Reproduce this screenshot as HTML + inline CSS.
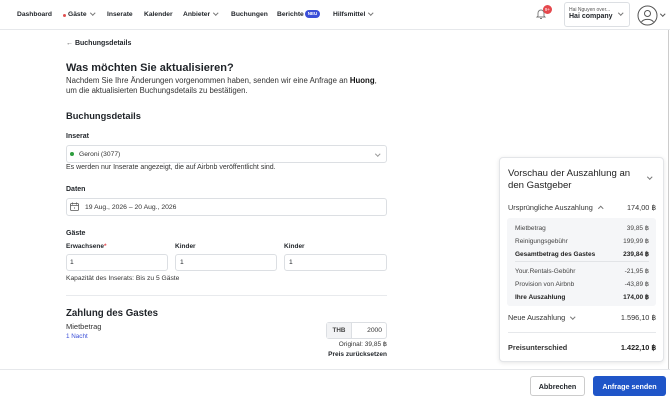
<!DOCTYPE html><html><head><meta charset="utf-8"><style>
*{margin:0;padding:0;box-sizing:border-box}
body{width:670px;height:402px;overflow:hidden;background:#fff;font-family:"Liberation Sans",sans-serif;color:#1f2328;position:relative}
.a{position:absolute;white-space:nowrap}
.nav{font-size:6.7px;font-weight:bold;top:11px}
.b{font-weight:bold}
.box{position:absolute;border:1px solid #dcdfe3;border-radius:3px;background:#fff}
.sm{font-size:7px}
.r{text-align:right}
.chev{display:inline-block;width:3.5px;height:3.5px;border-right:.8px solid #777;border-bottom:.8px solid #777;transform:rotate(45deg);margin-left:4px;position:relative;top:-2px}
.pc{position:absolute;width:3.5px;height:3.5px;border-right:.8px solid #777;border-bottom:.8px solid #777;transform:rotate(45deg)}
</style></head><body>
<div class="a" style="left:0;top:29px;width:670px;height:1px;background:#e6e8eb"></div>
<div class="a nav" style="left:17px">Dashboard</div>
<div class="a" style="left:63px;top:14px;width:3px;height:3px;border-radius:2px;background:#e05050"></div>
<div class="a nav" style="left:68px">Gäste<span class="chev"></span></div>
<div class="a nav" style="left:107px">Inserate</div>
<div class="a nav" style="left:144px">Kalender</div>
<div class="a nav" style="left:183px">Anbieter<span class="chev"></span></div>
<div class="a nav" style="left:231px">Buchungen</div>
<div class="a nav" style="left:277px">Berichte</div>
<div class="a" style="left:305px;top:10px;width:15px;height:8px;border-radius:4px;background:#3b4fd8;color:#fff;font-size:4.5px;font-weight:bold;text-align:center;line-height:8px">NEU</div>
<div class="a nav" style="left:333px">Hilfsmittel<span class="chev"></span></div>
<svg class="a" style="left:535px;top:8px" width="12" height="12" viewBox="0 0 12 12"><path d="M3 8V5a3 3 0 016 0v3l1 1H2z M5 10.5h2" fill="none" stroke="#777" stroke-width=".9"/></svg>
<div class="a" style="left:543px;top:5px;width:9px;height:9px;border-radius:5px;background:#e5484d;color:#fff;font-size:4.5px;text-align:center;line-height:9px">9+</div>
<div class="box" style="left:564px;top:2px;width:66px;height:25px"></div>
<div class="a" style="left:569px;top:7px;font-size:5px;color:#555">Hai Nguyen over...</div>
<div class="a b" style="left:569px;top:13px;font-size:7px">Hai company</div>
<span class="pc" style="left:619px;top:11px"></span>
<svg class="a" style="left:637px;top:5px" width="21" height="21" viewBox="0 0 21 21"><circle cx="10.5" cy="10.5" r="9.5" fill="none" stroke="#555" stroke-width="1"/><circle cx="10.5" cy="8.5" r="3" fill="none" stroke="#555"/><path d="M4.5 17c2-3.5 10-3.5 12 0" fill="none" stroke="#555"/></svg>
<span class="pc" style="left:661px;top:12px;border-color:#555"></span>
<div class="a" style="left:668px;top:30px;width:1px;height:340px;background:#ccc"></div>

<div class="a" style="left:66px;top:40px;font-size:7px"><span style="color:#555">←</span> <b>Buchungsdetails</b></div>
<div class="a b" style="left:66px;top:62px;font-size:11px">Was möchten Sie aktualisieren?</div>
<div class="a" style="left:66px;top:76px;font-size:7.8px;line-height:10px;color:#333">Nachdem Sie Ihre Änderungen vorgenommen haben, senden wir eine Anfrage an <b style="color:#111">Huong</b>,<br>um die aktualisierten Buchungsdetails zu bestätigen.</div>
<div class="a b" style="left:66px;top:111px;font-size:9.3px">Buchungsdetails</div>
<div class="a b sm" style="left:66px;top:133px">Inserat</div>
<div class="box" style="left:66px;top:145px;width:321px;height:18px"></div>
<div class="a" style="left:70px;top:152px;width:4px;height:4px;border-radius:2px;background:#2e9e3e"></div>
<div class="a" style="left:79px;top:151px;font-size:6.7px;color:#333">Geroni (3077)</div>
<span class="pc" style="left:376px;top:152px;border-color:#999"></span>
<div class="a" style="left:66px;top:164px;font-size:7px;color:#333">Es werden nur Inserate angezeigt, die auf Airbnb veröffentlicht sind.</div>
<div class="a b sm" style="left:66px;top:186px">Daten</div>
<div class="box" style="left:66px;top:198px;width:321px;height:18px"></div>
<svg class="a" style="left:70px;top:202px" width="9" height="9" viewBox="0 0 9 9"><rect x=".5" y="1.5" width="8" height="7" rx="1" fill="none" stroke="#555" stroke-width=".8"/><path d="M.5 3.5h8M2.5 .5v2M6.5 .5v2" stroke="#555" stroke-width=".8"/><rect x="4" y="5.5" width="1" height="1" fill="#555"/></svg>
<div class="a" style="left:85px;top:204px;font-size:6.8px;color:#333">19 Aug., 2026 – 20 Aug., 2026</div>
<div class="a b sm" style="left:66px;top:230px">Gäste</div>
<div class="a b" style="left:66px;top:243px;font-size:6.5px">Erwachsene<span style="color:#e5484d">*</span></div>
<div class="a b" style="left:175px;top:243px;font-size:6.5px">Kinder</div>
<div class="a b" style="left:284px;top:243px;font-size:6.5px">Kinder</div>
<div class="box" style="left:66px;top:254px;width:102px;height:17px"></div>
<div class="box" style="left:175px;top:254px;width:102px;height:17px"></div>
<div class="box" style="left:284px;top:254px;width:103px;height:17px"></div>
<div class="a" style="left:70px;top:259px;font-size:6.7px">1</div>
<div class="a" style="left:180px;top:259px;font-size:6.7px">1</div>
<div class="a" style="left:289px;top:259px;font-size:6.7px">1</div>
<div class="a" style="left:66px;top:275px;font-size:6.7px;color:#333">Kapazität des Inserats: Bis zu 5 Gäste</div>
<div class="a" style="left:66px;top:295px;width:321px;height:1px;background:#e8eaed"></div>
<div class="a b" style="left:66px;top:308px;font-size:9.7px">Zahlung des Gastes</div>
<div class="a" style="left:66px;top:322px;font-size:7.5px;color:#333">Mietbetrag</div>
<div class="a" style="left:66px;top:333px;font-size:6.3px;color:#3b4fd8">1 Nacht</div>
<div class="box" style="left:326px;top:322px;width:61px;height:17px"></div>
<div class="a" style="left:327px;top:323px;width:25px;height:15px;background:#f2f3f5;border-right:1px solid #dcdfe3;font-size:6.3px;font-weight:bold;text-align:center;line-height:15px;color:#444">THB</div>
<div class="a r" style="left:352px;top:327px;width:30px;font-size:6.7px;color:#333">2000</div>
<div class="a r" style="left:300px;top:340px;width:87px;font-size:6.5px;color:#333">Original: 39,85 ฿</div>
<div class="a r b" style="left:300px;top:351px;width:87px;font-size:6.5px">Preis zurücksetzen</div>

<div class="a" style="left:0;top:369px;width:670px;height:1px;background:#e6e8eb"></div>
<div class="box" style="left:530px;top:376px;width:55px;height:20px;border-color:#ccc;font-size:7.2px;font-weight:bold;text-align:center;line-height:20px">Abbrechen</div>
<div class="a" style="left:593px;top:376px;width:73px;height:20px;background:#1f55c8;border-radius:3px;color:#fff;font-size:7.2px;font-weight:bold;text-align:center;line-height:21px">Anfrage senden</div>

<div class="a" style="left:499px;top:157px;width:165px;height:205px;border:1px solid #e3e5e8;border-radius:4px;background:#fff;box-shadow:0 1px 4px rgba(0,0,0,.1)"></div>
<div class="a" style="left:508px;top:168px;font-size:9.6px;line-height:12px;color:#222">Vorschau der Auszahlung an<br>den Gastgeber</div>
<span class="pc" style="left:648px;top:175px"></span>
<div class="a" style="left:508px;top:203px;font-size:7.3px;color:#333">Ursprüngliche Auszahlung <span class="chev" style="transform:rotate(225deg);top:0px"></span></div>
<div class="a r" style="left:600px;top:203px;width:56px;font-size:7.3px;color:#333">174,00 ฿</div>
<div class="a" style="left:507px;top:218px;width:149px;height:88px;background:#f5f6f8;border-radius:3px"></div>
<div class="a" style="left:515px;top:222px;font-size:6.5px;color:#444;line-height:13px">Mietbetrag<br>Reinigungsgebühr<br><b style="color:#222">Gesamtbetrag des Gastes</b></div>
<div class="a r" style="left:590px;top:222px;width:59px;font-size:6.5px;color:#444;line-height:13px">39,85 ฿<br>199,99 ฿<br><b style="color:#222">239,84 ฿</b></div>
<div class="a" style="left:515px;top:261px;width:134px;height:1px;background:#e2e4e7"></div>
<div class="a" style="left:515px;top:265px;font-size:6.5px;color:#444;line-height:13px">Your.Rentals-Gebühr<br>Provision von Airbnb<br><b style="color:#222">Ihre Auszahlung</b></div>
<div class="a r" style="left:590px;top:265px;width:59px;font-size:6.5px;color:#444;line-height:13px">-21,95 ฿<br>-43,89 ฿<br><b style="color:#222">174,00 ฿</b></div>
<div class="a" style="left:508px;top:313px;font-size:7.3px;color:#333">Neue Auszahlung <span class="chev"></span></div>
<div class="a r" style="left:590px;top:313px;width:66px;font-size:7.3px;color:#333">1.596,10 ฿</div>
<div class="a" style="left:508px;top:332px;width:148px;height:1px;background:#e6e8eb"></div>
<div class="a b" style="left:508px;top:343px;font-size:7.3px;color:#333">Preisunterschied</div>
<div class="a r b" style="left:590px;top:343px;width:66px;font-size:7.3px;color:#222">1.422,10 ฿</div>
</body></html>
